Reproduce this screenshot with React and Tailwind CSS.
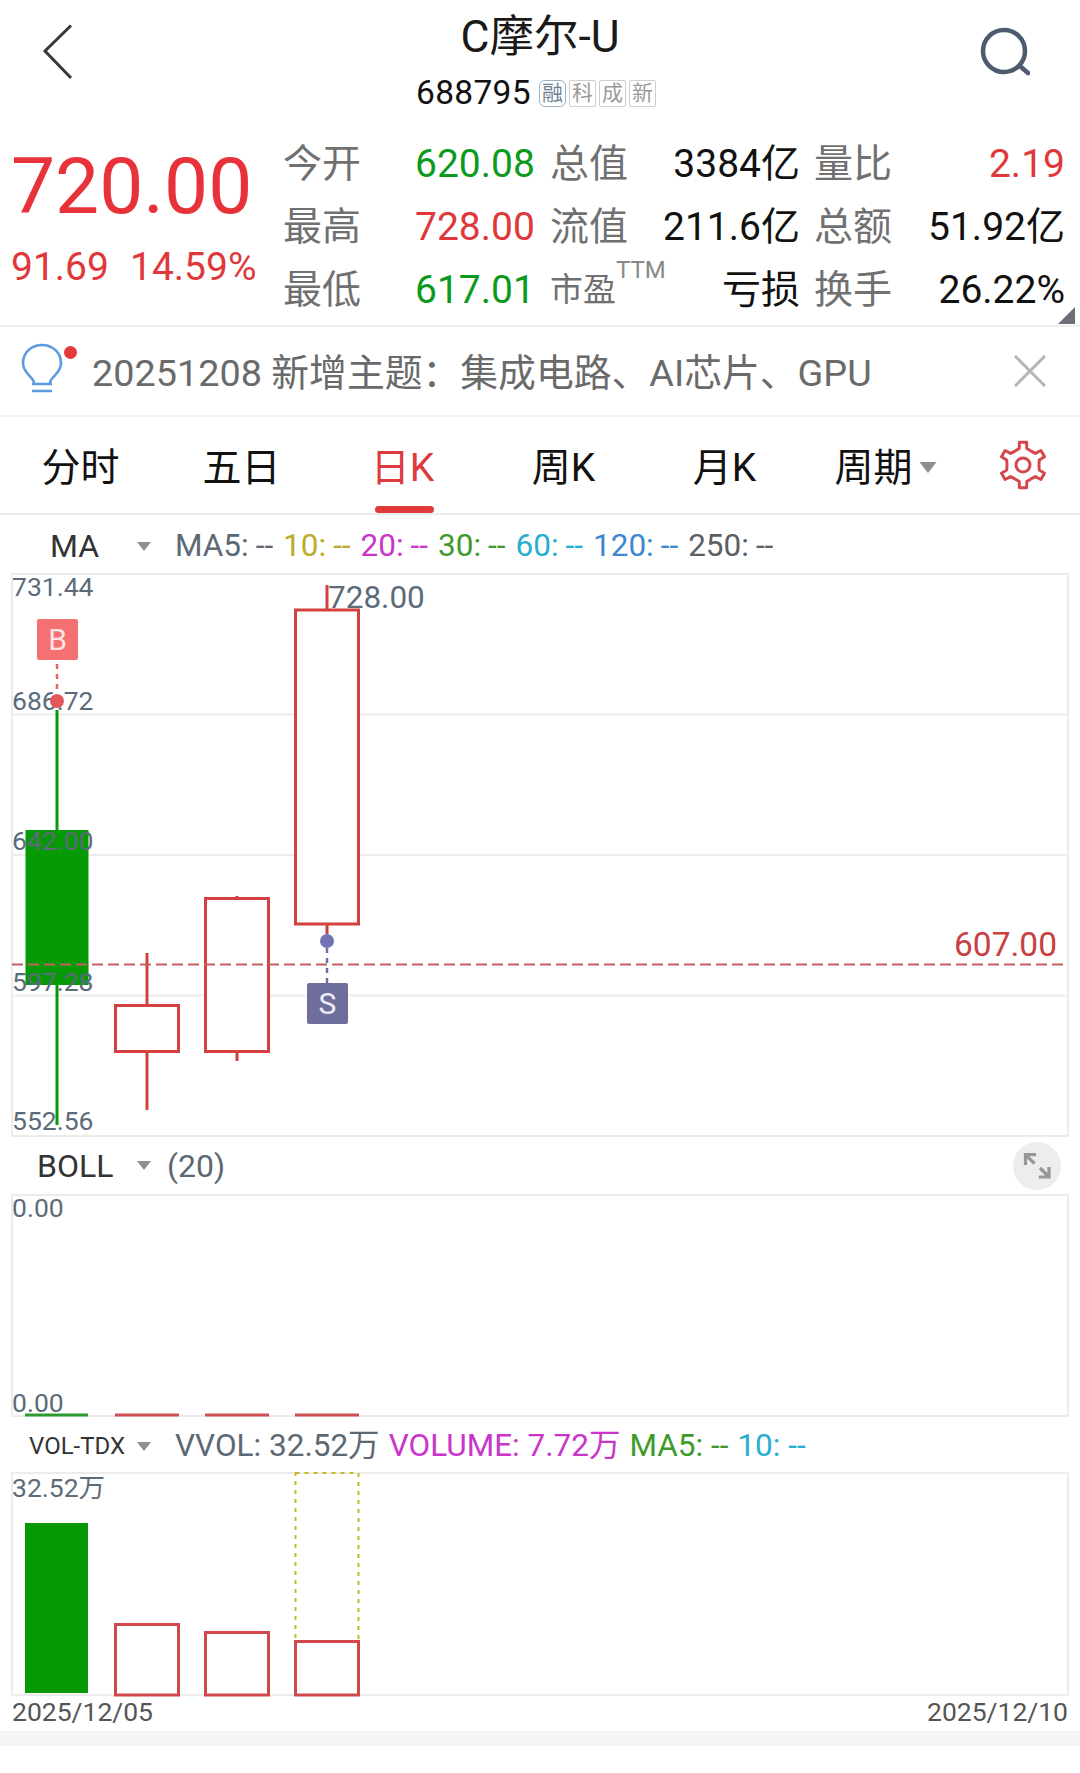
import React from 'react';

const tabs = ['分时', '五日', '日K', '周K', '月K'];

const maLegend = [
  ['MA5:', 'text-[#5c6873]'],
  ['10:', 'text-[#b9ad2a]'],
  ['20:', 'text-[#c935cb]'],
  ['30:', 'text-[#3f9a2c]'],
  ['60:', 'text-[#27afcf]'],
  ['120:', 'text-[#3f86d1]'],
  ['250:', 'text-[#5a5f66]'],
];

const statRows = [
  { label: '今开', value: '620.08', valueCls: 'text-[#0c9a1c]', label2: '总值', value2: '3384亿', label3: '量比', value3: '2.19', value3Cls: 'text-[#e0383a]' },
  { label: '最高', value: '728.00', valueCls: 'text-[#e0383a]', label2: '流值', value2: '211.6亿', label3: '总额', value3: '51.92亿', value3Cls: 'text-[#111]' },
  { label: '最低', value: '617.01', valueCls: 'text-[#0c9a1c]', label2: '市盈', value2: '亏损', label3: '换手', value3: '26.22%', value3Cls: 'text-[#111]' },
];

// six tooth cog, teeth at 30 / 90 / 150 ...
function gearPath(cx, cy, R, r) {
  const pts = [];
  for (let i = 0; i < 6; i++) {
    const a = 30 + i * 60;
    [[a - 30, r], [a - 13, r + 1], [a - 9, R], [a + 9, R], [a + 13, r + 1]].forEach(([deg, rad]) => {
      const t = (deg * Math.PI) / 180;
      pts.push(`${(cx + rad * Math.cos(t)).toFixed(1)} ${(cy + rad * Math.sin(t)).toFixed(1)}`);
    });
  }
  return `M${pts.join('L')}Z`;
}

function Caret({ w = 14, h = 9, className = '' }) {
  return (
    <svg width={w} height={h} viewBox="0 0 14 9" className={className}>
      <path d="M0 0h14L7 9z" fill="#8f8f8f" />
    </svg>
  );
}

function Header() {
  return (
    <div className="flex h-[131px] items-start">
      <div className="w-[130px] pl-[42px] pt-[24px]">
        <svg width="32" height="56" viewBox="0 0 32 56" fill="none" stroke="#3a3a3a" strokeWidth="3">
          <path d="M29 1.5 3 27l26 27" />
        </svg>
      </div>
      <div className="flex flex-1 flex-col items-center pt-[14px]">
        <div className="text-[44.5px] leading-[46px] text-[#1a1a1a]">C摩尔-U</div>
        <div className="mr-[8px] mt-[16px] flex items-center">
          <span className="text-[33.5px] leading-[34px] tracking-[0.3px] text-[#111]">688795</span>
          <span className="ml-[8px] flex h-[27px] w-[27px] items-center justify-center rounded-[6px] border border-[#9fb1c2] text-[21px] leading-none text-[#6f8396]">融</span>
          {['科', '成', '新'].map((t) => (
            <span key={t} className="ml-[3px] flex h-[27px] w-[27px] items-center justify-center rounded-[2px] border border-[#cfcfcf] text-[21px] leading-none text-[#9a9a9a]">{t}</span>
          ))}
        </div>
      </div>
      <div className="flex w-[130px] justify-end pr-[50px] pt-[27px]">
        <svg width="50" height="50" viewBox="0 0 50 50" fill="none" stroke="#4d5b6e" strokeWidth="4.5" strokeLinecap="round">
          <circle cx="24" cy="24" r="21" />
          <path d="M41 40l7 6" />
        </svg>
      </div>
    </div>
  );
}

function Quote() {
  return (
    <div className="relative flex h-[196px] border-b-2 border-[#f0f0f0]">
      <div className="w-[283px] pl-[11px]">
        <div className="pt-[2px] text-[78.5px] leading-[106px] text-[#e8323a]">720.00</div>
        <div className="mt-[5px] flex text-[39px] leading-[46px] text-[#e0383a]">
          <span className="w-[119px]">91.69</span>
          <span>14.59%</span>
        </div>
      </div>
      <div className="grid h-[191px] grid-cols-[132px_135px_77px_173px_92px_173px] grid-rows-3 items-center whitespace-nowrap pt-[1px] text-[39px] leading-[46px]">
        {statRows.map((r, i) => (
          <React.Fragment key={r.label}>
            <span className="text-[#707070]">{r.label}</span>
            <span className={r.valueCls}>{r.value}</span>
            {i === 2 ? (
              <span className="flex items-start text-[33px] text-[#707070]">
                {r.label2}
                <span className="-mt-[9px] text-[24px] leading-[24px] text-[#888]">TTM</span>
              </span>
            ) : (
              <span className="text-[#707070]">{r.label2}</span>
            )}
            <span className="text-right text-[#111]">{r.value2}</span>
            <span className="pl-[14px] text-[#707070]">{r.label3}</span>
            <span className={`text-right ${r.value3Cls}`}>{r.value3}</span>
          </React.Fragment>
        ))}
      </div>
      <svg width="17" height="17" viewBox="0 0 17 17" className="absolute bottom-[1px] right-[5px]">
        <path d="M17 0v17H0z" fill="#6a6f75" />
      </svg>
    </div>
  );
}

function Notice() {
  return (
    <div className="relative flex h-[90px] items-center border-b-2 border-[#f0f0f0] pl-[21px] pr-[34px]">
      <svg width="44" height="56" viewBox="0 0 44 56" fill="none" className="shrink-0">
        <path d="M13 40c0-6-11-9-11-20C2 9 11 2 21 2s19 7 19 18c0 11-11 14-11 20" stroke="#5a9ae0" strokeWidth="2.6" />
        <path d="M11 41h20M11 48h20" stroke="#5a9ae0" strokeWidth="2.6" />
      </svg>
      <span className="absolute left-[64px] top-[19px] h-[13px] w-[13px] rounded-full bg-[#e5383b]" />
      <span className="ml-[27px] mt-[4px] flex-1 whitespace-nowrap text-[37.8px] leading-[46px] text-[#6a6a6a]">20251208 新增主题：集成电路、AI芯片、GPU</span>
      <svg width="32" height="32" viewBox="0 0 32 32" stroke="#b5b5b5" strokeWidth="3">
        <path d="M1 1l30 30M31 1 1 31" />
      </svg>
    </div>
  );
}

function Tabs() {
  return (
    <div className="grid h-[98px] grid-cols-[161px_161px_161px_161px_161px_161px_114px] items-center border-b-2 border-[#ececec] text-[39px] leading-[46px] text-[#111]">
      {tabs.map((t) => (
        <div key={t} className={`relative flex h-full items-center justify-center pt-[5px] ${t === '日K' ? 'text-[#dd3a3d]' : ''}`}>
          {t}
          {t === '日K' && <span className="absolute bottom-0 left-[53px] h-[7px] w-[59px] rounded-full bg-[#e03a3c]" />}
        </div>
      ))}
      <div className="flex items-center justify-center pt-[5px]">
        周期
        <Caret w={18} h={11} className="ml-[6px]" />
      </div>
      <div className="flex items-center justify-center">
        <svg width="50" height="50" viewBox="0 0 50 50" fill="none" stroke="#d4484b" strokeWidth="3" strokeLinejoin="round">
          <path d={gearPath(25, 25, 23, 16)} />
          <circle cx="25" cy="25" r="7" />
        </svg>
      </div>
    </div>
  );
}

function ChartText({ x, y, children, size = 26.5, cls = 'fill-[#5c6b7a]', anchor = 'start' }) {
  return (
    <text x={x} y={y} textAnchor={anchor} dominantBaseline="central" fontSize={size} className={cls}>
      {children}
    </text>
  );
}

function KChart() {
  const red = '#d2403f';
  const green = '#079a07';
  return (
    <svg width="1058" height="564" viewBox="11 573 1058 564" className="ml-[11px] block overflow-visible">
      <rect x="12" y="574" width="1056" height="562" fill="none" stroke="#ececec" strokeWidth="2" />
      {[714.5, 855, 995.5].map((y) => (
        <line key={y} x1="12" x2="1068" y1={y} y2={y} stroke="#ececec" strokeWidth="2" />
      ))}

      <line x1="57" x2="57" y1="710" y2="1125" stroke={green} strokeWidth="3" />
      <rect x="25.5" y="830" width="63" height="155" fill={green} />

      <line x1="147" x2="147" y1="953" y2="1110" stroke={red} strokeWidth="3" />
      <rect x="115.5" y="1005.5" width="63" height="46" fill="#fff" stroke={red} strokeWidth="3" />

      <line x1="237" x2="237" y1="896" y2="1061" stroke={red} strokeWidth="3" />
      <rect x="205.5" y="898.5" width="63" height="153" fill="#fff" stroke={red} strokeWidth="3" />

      <line x1="327" x2="327" y1="585" y2="934" stroke={red} strokeWidth="3" />
      <rect x="295.5" y="610" width="63" height="314" fill="#fff" stroke={red} strokeWidth="3" />

      <line x1="12" x2="1066" y1="964.5" y2="964.5" stroke="#c2605f" strokeWidth="2" strokeDasharray="11 5" />

      <ChartText x={12} y={586}>731.44</ChartText>
      <ChartText x={12} y={700}>686.72</ChartText>
      <ChartText x={12} y={840}>642.00</ChartText>
      <ChartText x={12} y={981}>597.28</ChartText>
      <ChartText x={12} y={1120}>552.56</ChartText>
      <ChartText x={328} y={597} size={31.5}>728.00</ChartText>
      <ChartText x={1057} y={944} size={33.5} anchor="end" cls="fill-[#c9403f]">607.00</ChartText>

      <rect x="37" y="619" width="41" height="41" rx="2" fill="#f47073" />
      <ChartText x={57.5} y={639} size={30} anchor="middle" cls="fill-[#fde3e3]">B</ChartText>
      <line x1="57" x2="57" y1="664" y2="694" stroke="#e0666a" strokeWidth="2.5" strokeDasharray="5 5" />
      <circle cx="57" cy="701" r="7" fill="#e2595c" />

      <circle cx="327" cy="941" r="7" fill="#7173b6" />
      <line x1="327" x2="327" y1="948" y2="983" stroke="#6b6da8" strokeWidth="2.5" strokeDasharray="5 5" />
      <rect x="307" y="983" width="41" height="41" rx="2" fill="#6d6e9b" />
      <ChartText x={327.5} y={1003} size={30} anchor="middle" cls="fill-[#eeeef8]">S</ChartText>
    </svg>
  );
}

function BollChart() {
  return (
    <svg width="1058" height="223" viewBox="11 1194 1058 223" className="ml-[11px] block overflow-visible">
      <rect x="12" y="1195" width="1056" height="221" fill="none" stroke="#ececec" strokeWidth="2" />
      <ChartText x={12} y={1207}>0.00</ChartText>
      <ChartText x={12} y={1402}>0.00</ChartText>
      <line x1="25" x2="88" y1="1415" y2="1415" stroke="#2f9a2f" strokeWidth="3" />
      <line x1="115" x2="179" y1="1415" y2="1415" stroke="#cf4f52" strokeWidth="3" />
      <line x1="205" x2="269" y1="1415" y2="1415" stroke="#cf4f52" strokeWidth="3" />
      <line x1="295" x2="359" y1="1415" y2="1415" stroke="#cf4f52" strokeWidth="3" />
    </svg>
  );
}

function VolChart() {
  const red = '#d2484a';
  return (
    <svg width="1058" height="225" viewBox="11 1472 1058 225" className="ml-[11px] block overflow-visible">
      <rect x="12" y="1473" width="1056" height="222" fill="none" stroke="#ececec" strokeWidth="2" />
      <rect x="295.5" y="1473" width="63" height="222" fill="none" stroke="#c4b92a" strokeWidth="2" strokeDasharray="4 5" />
      <ChartText x={12} y={1487}>32.52万</ChartText>
      <rect x="25" y="1523" width="63" height="170" fill="#079a07" />
      <rect x="115.5" y="1624.5" width="63" height="70.5" fill="#fff" stroke={red} strokeWidth="3" />
      <rect x="205.5" y="1632.5" width="63" height="62.5" fill="#fff" stroke={red} strokeWidth="3" />
      <rect x="295.5" y="1641.5" width="63" height="53.5" fill="#fff" stroke={red} strokeWidth="3" />
    </svg>
  );
}

export default function App() {
  return (
    <div className="h-[1773px] w-[1080px] overflow-hidden bg-white font-['Roboto','Noto_Sans_CJK_SC',sans-serif]">
      <Header />
      <Quote />
      <Notice />
      <Tabs />

      {/* MA row */}
      <div className="flex h-[58px] items-center pt-[4px] text-[31.5px] leading-[40px]">
        <span className="w-[137px] pl-[50px] text-[32px] text-[#333]">MA</span>
        <Caret />
        <div className="ml-[24px] flex gap-[10px]">
          {maLegend.map(([label, cls]) => (
            <span key={label} className={cls}>
              {label}
              <span className="ml-[7px]">--</span>
            </span>
          ))}
        </div>
      </div>
      <KChart />

      {/* BOLL row */}
      <div className="flex h-[57px] items-center text-[32px] leading-[40px]">
        <span className="w-[137px] pl-[37px] text-[#333]">BOLL</span>
        <Caret />
        <span className="ml-[16px] flex-1 text-[#5c6873]">(20)</span>
        <div className="mr-[19px] flex h-[48px] w-[48px] items-center justify-center rounded-full bg-[#ededed]">
          <svg width="28" height="28" viewBox="0 0 28 28" fill="none" stroke="#979797" strokeWidth="3.2">
            <path d="M2.5 13V2.7H13M2.5 2.7l9 9M26 15v10H15.7M26 25l-9-9" />
          </svg>
        </div>
      </div>
      <BollChart />

      {/* VOL row */}
      <div className="flex h-[55px] items-center pt-[3px] text-[31.5px] leading-[40px]">
        <span className="w-[137px] pl-[29px] text-[24px] text-[#333]">VOL-TDX</span>
        <Caret />
        <div className="ml-[24px] flex gap-[9px]">
          <span className="text-[#5c6873]">VVOL: 32.52万</span>
          <span className="text-[#c935cb]">VOLUME: 7.72万</span>
          <span className="text-[#3f9a2c]">MA5: --</span>
          <span className="text-[#27afcf]">10: --</span>
        </div>
      </div>
      <VolChart />

      <div className="flex h-[34px] items-center justify-between pb-[5px] pl-[12px] pr-[12px] text-[26.5px] text-[#555]">
        <span>2025/12/05</span>
        <span>2025/12/10</span>
      </div>
      <div className="h-[15px] bg-[#f5f5f5]" />
    </div>
  );
}
